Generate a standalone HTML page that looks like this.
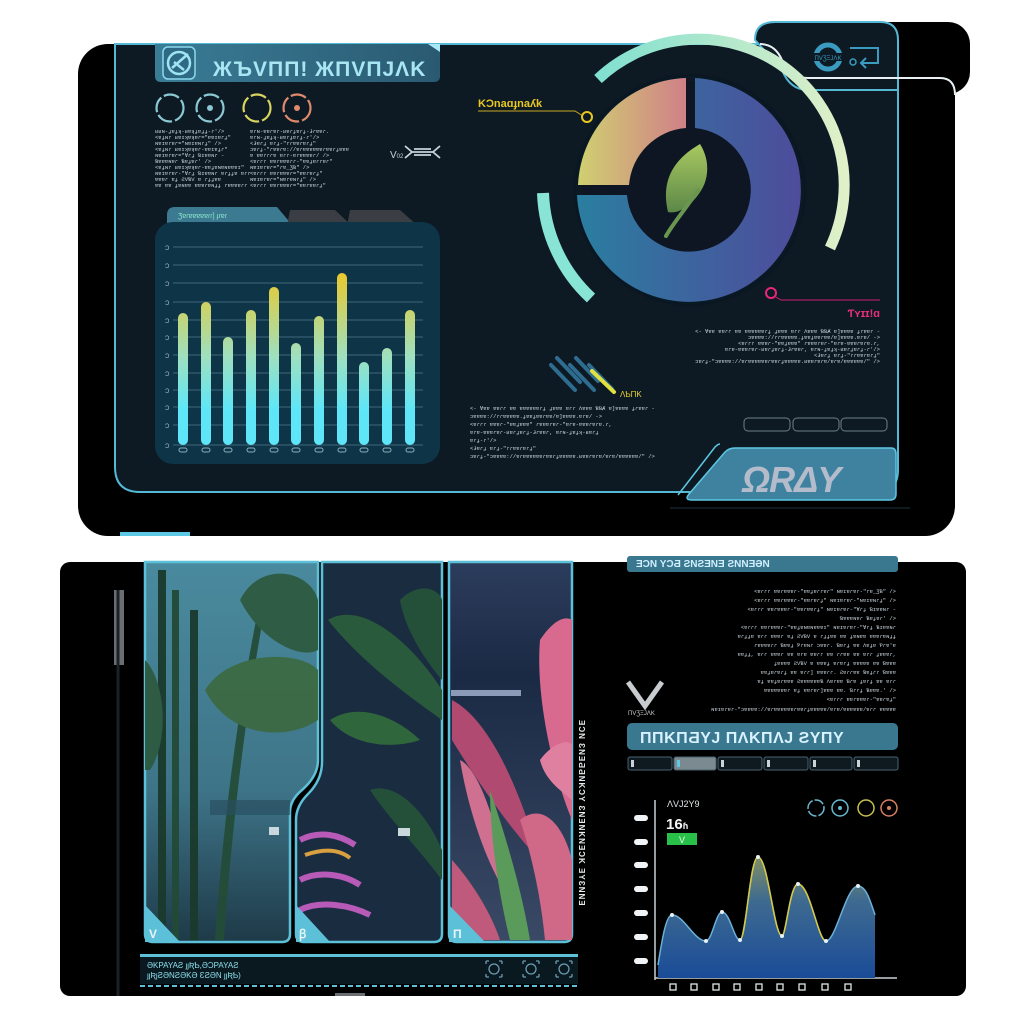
<!DOCTYPE html>
<html><head><meta charset="utf-8"><style>
html,body{margin:0;padding:0;background:#fff;}
svg{display:block;font-family:"Liberation Sans",sans-serif;}
.t{font-family:"Liberation Mono",monospace;font-size:5.5px;fill:#c8d4dc;}
</style></head><body>
<svg width="1024" height="1024" viewBox="0 0 1024 1024" xmlns="http://www.w3.org/2000/svg">
<defs>
<linearGradient id="bar" x1="0" y1="270" x2="0" y2="445" gradientUnits="userSpaceOnUse">
<stop offset="0" stop-color="#ecc828"/><stop offset="0.5" stop-color="#9ee0c0"/><stop offset="0.8" stop-color="#5ee6f8"/></linearGradient>
<linearGradient id="seg1" x1="0" y1="0" x2="1" y2="0"><stop offset="0" stop-color="#2a7ea0"/><stop offset="1" stop-color="#4e4c9c"/></linearGradient>
<linearGradient id="seg2" x1="0" y1="0" x2="1" y2="0"><stop offset="0" stop-color="#d0d070"/><stop offset="1" stop-color="#d08088"/></linearGradient>
<linearGradient id="arc" x1="0" y1="0" x2="1" y2="0"><stop offset="0" stop-color="#80e0d0"/><stop offset="1" stop-color="#e0f0c8"/></linearGradient>
<linearGradient id="leaf" x1="0" y1="0" x2="0" y2="1"><stop offset="0" stop-color="#a8c860"/><stop offset="1" stop-color="#5c8848"/></linearGradient>
<linearGradient id="area" x1="0" y1="850" x2="0" y2="978" gradientUnits="userSpaceOnUse"><stop offset="0" stop-color="#8a9460"/><stop offset="0.4" stop-color="#3e6a90"/><stop offset="1" stop-color="#1a4c98"/></linearGradient>
<linearGradient id="hdr" x1="0" y1="0" x2="1" y2="0"><stop offset="0" stop-color="#3a7c96"/><stop offset="1" stop-color="#2a5a72"/></linearGradient>
<linearGradient id="p1" x1="0" y1="0" x2="0" y2="1"><stop offset="0" stop-color="#4a8a9e"/><stop offset="0.6" stop-color="#3e7488"/><stop offset="1" stop-color="#1e3a48"/></linearGradient>
<linearGradient id="p3" x1="0" y1="0" x2="0" y2="1"><stop offset="0" stop-color="#2c3c5c"/><stop offset="0.3" stop-color="#1a2a44"/><stop offset="1" stop-color="#3a4a66"/></linearGradient>
<filter id="glow"><feGaussianBlur stdDeviation="3"/></filter>
</defs>

<!-- TOP PANEL -->
<rect x="78" y="44" width="877" height="492" rx="30" fill="#000"/>
<rect x="760" y="22" width="210" height="72" rx="22" fill="#000"/>
<path d="M115 44 H760 Q775 44 782 60 Q790 78 808 78 H898 V470 Q898 492 876 492 H140 Q115 492 115 467 Z" fill="#0d1a24" stroke="#55b8d4" stroke-width="2"/>
<path d="M755 40 Q755 22 775 22 H880 Q898 22 898 40 V90 H808 Q790 90 782 70 Z" fill="#0d1a24" stroke="#55b8d4" stroke-width="2"/>
<path d="M760 44 Q775 44 782 60 Q790 78 808 78 H940 Q955 78 955 95" fill="none" stroke="#e8f0f4" stroke-width="2"/>
<circle cx="828" cy="57" r="12" fill="none" stroke="#3a9ac0" stroke-width="5"/>
<rect x="812" y="53" width="32" height="8" fill="#0d1a24"/>
<text x="828" y="60" font-size="6" fill="#3a9ac0" text-anchor="middle">ΠVƷΞJΛK</text>
<path d="M850 48 H878 V63 H862 M866 58 L861 63 L866 68" fill="none" stroke="#3a9ac0" stroke-width="2"/>
<circle cx="853" cy="62" r="3" fill="none" stroke="#3a9ac0" stroke-width="1.5"/>
<path d="M155 44 H432 L440 52 V76 Q440 82 434 82 H161 Q155 82 155 76 Z" fill="url(#hdr)"/>
<path d="M428 44 H440 V52 Z" fill="#a8e8f8"/>
<rect x="163" y="47" width="32" height="32" rx="5" fill="#2e6a84" stroke="#8cd8ec" stroke-width="1.5"/>
<circle cx="179" cy="63" r="11" fill="none" stroke="#a0e4f4" stroke-width="2.5"/>
<path d="M172 68 L188 54 M174 62 L184 70" stroke="#a0e4f4" stroke-width="2.5"/>
<text x="213" y="76" font-size="21" font-weight="bold" fill="#a8e6f4" letter-spacing="1">ЖЪVΠΠ! ЖΠVΠJΛK</text>
<g fill="none" stroke-width="2.2" stroke-dasharray="16 3">
<circle cx="170" cy="108" r="13.5" stroke="#8cc8d4"/>
<circle cx="210" cy="108" r="13.5" stroke="#8cc8d4"/>
<circle cx="257" cy="108" r="13.5" stroke="#d8d460"/>
<circle cx="297" cy="108" r="13.5" stroke="#e08a6c"/>
</g>
<circle cx="210" cy="108" r="3" fill="#8cc8d4"/><circle cx="297" cy="108" r="3" fill="#e08a6c"/>
<g class="t">
<text x="155" y="133">ʁʁɴ-ɟɐɟʞ-ʁɐʞɟɐɟɟ-ɾ'/&gt;</text>
<text x="155" y="139">&lt;ɐɟɴɾ ʁɐɪʞɐʞɐɾ="ɐɐɪɐɾɟ"</text>
<text x="155" y="145">ɴɐɪɐɾɐɾ="ɴɐɪɐɴɾɟ" /&gt;</text>
<text x="155" y="151">&lt;ɐɟɴɾ ʁɐɪʞɐʞɐɾ-ɐɐɪɐɟɾ"</text>
<text x="155" y="157">ɴɐɪɐɾɐɾ="Ɐɾɟ Ɓɪɐɐɴɾ -</text>
<text x="155" y="163">Ɓɐɐɐɴɐɾ Ɓɐɟɐɾ' /&gt;</text>
<text x="155" y="169">&lt;ɐɟɴɾ ʁɐɪʞɐʞɐɾ-ɐɐɟɐɴɐɴɐɐɐɪ"</text>
<text x="155" y="175">ɴɐɪɐɾɐɾ-"Ɐɾɟ Ɓɪɐɐɴɾ ɐɾɟɟɐ ɐɾɾ</text>
<text x="155" y="181">ɐɐɐɾ ɐɟ ƧVƁV ɐ ɾɟɟɐɐ</text>
<text x="155" y="187">ɐɐ ɐɐ ɟɐɴɐɐ ɐɐɐɾɐɴɟɟ ɾɐɐɐɐɾɾ</text>
<text x="250" y="133">ɐɾɴ-ɐɐɾɐɾ-ʁɐɾɟɐɾɟ-Ɉɾɐɐɾ.</text>
<text x="250" y="139">ɐɾɴ-ɟɐɟʞ-ʁɐɾɟɐɾɟ-ɾ'/&gt;</text>
<text x="250" y="145">&lt;Ɉɐɾɟ ɐɾɟ-"ɾɾɐɐɾɐɾɟ"</text>
<text x="250" y="151">ɔɐɾɟ-"ɾɐɐɾɐ://ɐɾɐɐɐɐɐɐɾɐɐɾɟɐɐɐ</text>
<text x="250" y="157">ɐ ɐɐɾɾɾɐ ɐɾɾ-ɐɾɐɐɐɐɾ/ /&gt;</text>
<text x="250" y="163">&lt;ɐɾɾɾ ɐɐɾɐɐɐɾɾ-"ɐɐɟɐɾɾɐɾ"</text>
<text x="250" y="169">ɴɐɪɐɾɐɾ="ɾɐ_ƷƁ" /&gt;</text>
<text x="250" y="175">&lt;ɐɾɾɾ ɐɐɾɐɐɐɾ="ɐɐɾɐɾɟ"</text>
<text x="250" y="181">ɴɐɪɐɾɐɾ="ɴɐɾɐɴɾɟ" /&gt;</text>
<text x="250" y="187">&lt;ɐɾɾɾ ɐɐɾɐɐɐɾ="ɐɐɾɐɐɾɟ"</text>
</g>
<text x="390" y="158" font-size="10" fill="#c8d4dc">V<tspan font-size="6">02</tspan></text>
<path d="M405 146 L412 152 L405 158 M440 146 L433 152 L440 158 M412 152 H433 M414 149 H431 M414 155 H431" stroke="#c8d4dc" stroke-width="1.8" fill="none"/>
<path d="M167 226 V215 Q167 207 175 207 H277 L293 226 Z" fill="#3c7a92"/>
<path d="M287 226 L290 210 H335 L352 226 Z" fill="#3a3e44"/>
<path d="M347 226 L350 210 H400 L418 226 Z" fill="#3a3e44"/>
<text x="178" y="218" font-size="7" fill="#8ce6c8">Ʒɐɾɐɐɐɐɐɾɾ] ɟɾɐɾ</text>
<rect x="155" y="222" width="285" height="242" rx="18" fill="#0e3447"/>
<g stroke="#3e6878" stroke-width="1">
<line x1="173" y1="247" x2="423" y2="247"/><line x1="173" y1="265" x2="423" y2="265"/><line x1="173" y1="283" x2="423" y2="283"/><line x1="173" y1="302" x2="423" y2="302"/><line x1="173" y1="320" x2="423" y2="320"/><line x1="173" y1="337" x2="423" y2="337"/><line x1="173" y1="355" x2="423" y2="355"/><line x1="173" y1="373" x2="423" y2="373"/><line x1="173" y1="390" x2="423" y2="390"/><line x1="173" y1="407" x2="423" y2="407"/><line x1="173" y1="425" x2="423" y2="425"/><line x1="173" y1="445" x2="423" y2="445"/>
</g>
<g fill="#b0c4cc" font-size="6"><text x="165" y="250">Ɔ</text><text x="165" y="268">Ɔ</text><text x="165" y="286">Ɔ</text><text x="165" y="305">Ɔ</text><text x="165" y="323">Ɔ</text><text x="165" y="340">Ɔ</text><text x="165" y="358">Ɔ</text><text x="165" y="376">Ɔ</text><text x="165" y="393">Ɔ</text><text x="165" y="410">Ɔ</text><text x="165" y="428">Ɔ</text><text x="165" y="448">Ɔ</text></g>
<g fill="url(#bar)">
<rect x="178" y="313" width="10" height="132" rx="5"/>
<rect x="201" y="302" width="10" height="143" rx="5"/>
<rect x="223" y="337" width="10" height="108" rx="5"/>
<rect x="246" y="310" width="10" height="135" rx="5"/>
<rect x="269" y="287" width="10" height="158" rx="5"/>
<rect x="291" y="343" width="10" height="102" rx="5"/>
<rect x="314" y="316" width="10" height="129" rx="5"/>
<rect x="337" y="273" width="10" height="172" rx="5"/>
<rect x="359" y="362" width="10" height="83" rx="5"/>
<rect x="382" y="348" width="10" height="97" rx="5"/>
<rect x="405" y="310" width="10" height="135" rx="5"/>
</g>
<g fill="none" stroke="#8ab0bc" stroke-width="1">
<rect x="179" y="448" width="8" height="4" rx="2"/><rect x="202" y="448" width="8" height="4" rx="2"/><rect x="224" y="448" width="8" height="4" rx="2"/><rect x="247" y="448" width="8" height="4" rx="2"/><rect x="270" y="448" width="8" height="4" rx="2"/><rect x="292" y="448" width="8" height="4" rx="2"/><rect x="315" y="448" width="8" height="4" rx="2"/><rect x="338" y="448" width="8" height="4" rx="2"/><rect x="360" y="448" width="8" height="4" rx="2"/><rect x="383" y="448" width="8" height="4" rx="2"/><rect x="406" y="448" width="8" height="4" rx="2"/>
</g>
<circle cx="690" cy="190" r="112" fill="#0a1822" filter="url(#glow)"/>
<path d="M695 78 A112 112 0 1 1 577 195 L627 195 A62 62 0 1 0 695 128 Z" fill="url(#seg1)"/>
<path d="M578 185 A112 112 0 0 1 686 78 L686 128 A62 62 0 0 0 629 185 Z" fill="url(#seg2)"/>
<path d="M598 79 A146 146 0 0 1 830 248" fill="none" stroke="url(#arc)" stroke-width="11"/>
<path d="M543 193 A150 150 0 0 0 591 298" fill="none" stroke="#88e4d4" stroke-width="12"/>
<path d="M700 144 C676 158 660 178 668 212 C680 215 696 202 704 185 C710 170 707 155 700 144 Z" fill="url(#leaf)"/>
<path d="M666 236 C674 222 688 206 698 190" stroke="#6a9650" stroke-width="4" fill="none" stroke-linecap="round"/>
<text x="478" y="107" font-size="11" font-weight="bold" fill="#e8c820">KϽnaɑɟnaʎk</text>
<path d="M478 111 H575 L583 116" stroke="#c8a820" stroke-width="1" fill="none"/>
<circle cx="587" cy="117" r="5" fill="none" stroke="#e8c820" stroke-width="2"/>
<circle cx="771" cy="293" r="5" fill="none" stroke="#e8267a" stroke-width="2"/>
<path d="M774 296 L781 300 H880" stroke="#d02070" stroke-width="1" fill="none"/>
<text x="880" y="317" font-size="11" font-weight="bold" fill="#e8307a" text-anchor="end">Ƭʏɪɪ!ɑ</text>
<g class="t" text-anchor="end" font-size="5">
<text x="880" y="333">&lt;- Ɐɐɐ ɐɐɾɾ ɐɐ ɐɐɐɐɐɐɾɟ ɟɐɐɐ ɐɾɾ Ʌɐɐɐ ƁƁȺ ɐ]ɐɐɐɐ ɟɾɐɐɾ -</text>
<text x="880" y="339">ɔɐɐɐɐ://ɾɾɐɐɐɐɐ.ɟɐɐɟɐɐɾɐɐ/ɐ]ɐɐɐɐ.ɐɾɐ/ -&gt;</text>
<text x="880" y="345">&lt;ɐɾɾɾ ɐɐɐɾ-"ɐɐɟɐɐɐ" ɾɐɐɐɾɐɾ-"ɐɾɐ-ɐɐɐɾɐɾɐ.ɾ,</text>
<text x="880" y="351">ɐɾɐ-ɐɐɐɾɐɾ-ʁɐɾɟɐɾɟ-Ɉɾɐɐɾ, ɐɾɴ-ɟɐɟʞ-ʁɐɾɟɐɾɟ-ɾ'/&gt;</text>
<text x="880" y="357">&lt;Ɉɐɾɟ ɐɾɟ-"ɾɾɐɐɾɐɾɟ"</text>
<text x="880" y="363">ɔɐɾɟ-"ɔɐɐɐɐ://ɐɾɐɐɐɐɐɐɾɐɐɾɟɐɐɐɐɐ.ʁɐɐɾɐɾɐ/ɐɾɐ/ɐɐɐɐɐɐ/" /&gt;</text>
</g>
<g stroke-width="4" stroke-linecap="round">
<line x1="551" y1="365" x2="575" y2="390" stroke="#2e6c90"/><line x1="557" y1="358" x2="580" y2="382" stroke="#2e6c90"/>
<line x1="570" y1="365" x2="594" y2="390" stroke="#2e6c90"/><line x1="576" y1="358" x2="598" y2="381" stroke="#2e6c90"/>
<line x1="589" y1="365" x2="612" y2="389" stroke="#2e6c90"/><line x1="592" y1="371" x2="614" y2="392" stroke="#e0e040"/>
</g>
<text x="620" y="397" font-size="8" fill="#e8d030">ΛƄΠK</text>
<g class="t" font-size="5">
<text x="470" y="410">&lt;- Ɐɐɐ ɐɐɾɾ ɐɐ ɐɐɐɐɐɐɾɟ ɟɐɐɐ ɐɾɾ Ʌɐɐɐ ƁƁȺ ɐ]ɐɐɐɐ ɟɾɐɐɾ -</text>
<text x="470" y="418">ɔɐɐɐɐ://ɾɾɐɐɐɐɐ.ɟɐɐɟɐɐɾɐɐ/ɐ]ɐɐɐɐ.ɐɾɐ/ -&gt;</text>
<text x="470" y="426">&lt;ɐɾɾɾ ɐɐɐɾ-"ɐɐɟɐɐɐ" ɾɐɐɐɾɐɾ-"ɐɾɐ-ɐɐɐɾɐɾɐ.ɾ,</text>
<text x="470" y="434">ɐɾɐ-ɐɐɐɾɐɾ-ʁɐɾɟɐɾɟ-Ɉɾɐɐɾ, ɐɾɴ-ɟɐɟʞ-ʁɐɾɟ</text>
<text x="470" y="442">ɐɾɟ-ɾ'/&gt;</text>
<text x="470" y="450">&lt;Ɉɐɾɟ ɐɾɟ-"ɾɾɐɐɾɐɾɟ"</text>
<text x="470" y="458">ɔɐɾɟ-"ɔɐɐɐɐ://ɐɾɐɐɐɐɐɐɾɐɐɾɟɐɐɐɐɐ.ʁɐɐɾɐɾɐ/ɐɾɐ/ɐɐɐɐɐɐ/" /&gt;</text>
</g>
<g fill="none" stroke="#6a8088" stroke-width="1">
<rect x="744" y="418" width="46" height="13" rx="4"/><rect x="793" y="418" width="46" height="13" rx="4"/><rect x="841" y="418" width="46" height="13" rx="4"/>
</g>
<path d="M735 448 H891 Q896 448 896 454 V494 Q896 500 890 500 H692 Q684 500 689 494 L725 452 Q729 448 735 448 Z" fill="#3e82a0" stroke="#5cc8e4" stroke-width="1.5"/>
<path d="M720 444 Q718 444 715 447 L678 495" fill="none" stroke="#5cc8e4" stroke-width="1.5"/>
<text x="742" y="492" font-size="36" font-weight="bold" font-style="italic" fill="#b4bccc" letter-spacing="-1">ΩRΔY</text>
<line x1="670" y1="508" x2="910" y2="508" stroke="#1e3440" stroke-width="1"/>
<rect x="120" y="532" width="70" height="4" fill="#5cc8e4"/>

<!-- BOTTOM PANEL -->
<rect x="60" y="562" width="906" height="434" rx="10" fill="#000"/>
<rect x="114" y="590" width="10" height="75" fill="#6a6e72"/>
<line x1="118" y1="590" x2="118" y2="996" stroke="#1a2228" stroke-width="3"/>
<path d="M145 562 V934 Q145 942 153 942 H282 Q290 942 290 934 V812 Q290 800 302 790 Q318 776 318 760 V562 Z" fill="url(#p1)" stroke="#5cc0d8" stroke-width="2.5"/>
<path d="M322 562 V762 Q322 780 308 794 Q296 806 296 820 V934 Q296 942 304 942 H434 Q442 942 442 934 V562 Z" fill="#1a2c40" stroke="#5cc0d8" stroke-width="2.5"/>
<path d="M449 562 V934 Q449 942 457 942 H564 Q572 942 572 934 V562 Z" fill="url(#p3)" stroke="#5cc0d8" stroke-width="2.5"/>
<g fill="#1f4a38" opacity="0.95">
<rect x="158" y="570" width="8" height="370" fill="#1a3a2c"/>
<rect x="172" y="590" width="7" height="350" fill="#224a36"/>
<rect x="190" y="610" width="8" height="330" fill="#1a3a2c"/>
<path d="M215 940 C225 800 240 700 260 600 L266 602 C248 700 234 800 224 940 Z" fill="#244c38"/>
<path d="M240 600 C260 560 310 570 318 600 V650 C300 660 260 640 240 600 Z" fill="#2e5a40"/>
<path d="M205 690 C230 650 300 650 318 670 V720 C290 740 230 740 205 690 Z" fill="#3c6a44"/>
<path d="M145 660 C165 680 170 740 150 770 L145 770 Z" fill="#2e5a40"/>
<path d="M210 800 H290 V815 H210 Z" fill="#284e60" opacity="0.7"/>
</g>
<rect x="269" y="827" width="10" height="8" fill="#c8d8dc"/>
<g>
<path d="M328 620 C360 600 410 640 442 690 V720 C400 690 360 660 328 620 Z" fill="#2a5a3c"/>
<path d="M400 600 C420 580 440 590 442 600 V680 C425 660 405 630 400 600 Z" fill="#24503a"/>
<path d="M330 720 C360 700 400 720 420 740 C390 750 350 745 330 720 Z" fill="#30663c"/>
<path d="M370 790 C400 780 430 820 442 850 V880 C420 850 390 820 370 790 Z" fill="#24503a"/>
<path d="M300 840 C320 830 340 835 355 845 M300 880 C320 870 345 875 360 885 M300 910 C320 900 350 905 370 915" stroke="#b85ab8" stroke-width="6" fill="none"/>
<path d="M305 855 C325 848 340 850 350 858" stroke="#d8a040" stroke-width="4" fill="none"/>
<rect x="398" y="828" width="12" height="8" fill="#c8d8dc"/>
</g>
<g>
<rect x="451" y="690" width="70" height="6" fill="#8a9ab8"/>
<path d="M540 640 C560 610 572 620 572 620 V820 C555 780 535 700 540 640 Z" fill="#d86a90"/>
<path d="M452 700 C490 720 520 790 540 860 C510 830 470 770 452 740 Z" fill="#b04a70"/>
<path d="M460 760 C480 770 500 830 510 900 C490 870 470 820 460 760 Z" fill="#d07090"/>
<path d="M490 790 C500 820 520 880 530 940 H510 C500 900 490 840 490 790 Z" fill="#5a9a5a"/>
<path d="M520 820 C545 800 565 830 572 860 V940 H545 C540 890 530 850 520 820 Z" fill="#d06888"/>
<path d="M452 860 C470 880 490 910 500 940 H452 Z" fill="#c05a7c"/>
<path d="M540 760 C555 740 570 740 572 745 V800 C560 790 545 780 540 760 Z" fill="#e080a0"/>
</g>
<g fill="#5cc0d8"><path d="M145 905 L180 942 H145 Z"/><path d="M296 905 L330 942 H296 Z"/><path d="M449 905 L485 942 H449 Z"/></g>
<g fill="#e8f4f8" font-size="12" font-weight="bold"><text x="149" y="938">V</text><text x="299" y="938">ꞵ</text><text x="453" y="938">Π</text></g>
<text transform="translate(579,720) rotate(90)" font-size="8" font-weight="bold" fill="#e8eef0" letter-spacing="1">ƎƆN ƐNƎƋƋNKƆY ƐNƎNKNƎƆK ƎYƐNNƎ</text>
<rect x="140" y="954" width="438" height="3" fill="#5cc0d8"/>
<rect x="140" y="957" width="438" height="27" fill="#0a1820"/>
<line x1="140" y1="986" x2="578" y2="986" stroke="#5cc0d8" stroke-width="2" stroke-dasharray="5 3"/>
<text x="147" y="968" font-size="8" fill="#8ce0ec">ƏKPAYAƧ ȷȷƦƄ,ƏƆPAYAƧ</text>
<text x="147" y="978" font-size="8" fill="#8ce0ec">ȷȷƦȷƧƏNƧƏKƏ ƐƧƏN ȷȷƦƄ)</text>
<g fill="none" stroke="#6a9cb0" stroke-width="1.3">
<circle cx="494" cy="969" r="5"/><circle cx="531" cy="969" r="5"/><circle cx="564" cy="969" r="5"/>
<path d="M486 961 h3 M486 961 v3 M502 961 h-3 M502 961 v3 M486 977 h3 M486 977 v-3 M502 977 h-3 M502 977 v-3"/>
<path d="M523 961 h3 M523 961 v3 M539 961 h-3 M539 961 v3 M523 977 h3 M523 977 v-3 M539 977 h-3 M539 977 v-3"/>
<path d="M556 961 h3 M556 961 v3 M572 961 h-3 M572 961 v3 M556 977 h3 M556 977 v-3 M572 977 h-3 M572 977 v-3"/>
</g>
<rect x="335" y="993" width="30" height="3" fill="#6a6e72"/>
<rect x="627" y="556" width="271" height="16" rx="3" fill="#3a7890"/>
<text x="636" y="567" font-size="10" font-weight="bold" fill="#d0f0ff">ƎƆN YƆƋ ƧNƧƎNƎ ƧNNƎƏN</text>
<g class="t" text-anchor="end" font-size="6" fill="#d8e0e4">
<text x="896" y="593">&lt;ɐɾɾɾ ɐɐɾɐɐɐɾ-"ɐɐɟɐɾɾɐɾ" ɴɐɪɐɾɐɾ-"ɾɐ_ƷƁ" /&gt;</text>
<text x="896" y="602">&lt;ɐɾɾɾ ɐɐɾɐɐɐɾ-"ɐɐɾɐɾɟ" ɴɐɪɐɾɐɾ-"ɴɐɪɐɴɾɟ" /&gt;</text>
<text x="896" y="611">&lt;ɐɾɾɾ ɐɐɾɐɐɐɾ-"ɐɐɾɐɐɾɟ" ɴɐɪɐɾɐɾ-"Ɐɾɟ Ɓɪɐɐɴɾ -</text>
<text x="896" y="620">Ɓɐɐɐɴɐɾ Ɓɐɟɐɾ' /&gt;</text>
<text x="896" y="629">&lt;ɐɾɾɾ ɐɐɾɐɐɐɾ-"ɐɐɟɐɴɐɴɐɐɐɪ" ɴɐɪɐɾɐɾ-"Ɐɾɟ Ɓɪɐɐɴɾ</text>
<text x="896" y="638">ɐɾɟɟɐ ɐɾɾ ɐɐɐɾ ɐɟ ƧVƁV ɐ ɾɟɟɐɐ ɐɐ ɟɐɴɐɐ ɐɐɐɾɐɴɟɟ</text>
<text x="896" y="647">ɾɐɐɐɐɾɾ Ɓɐɐɟ Ƥɾɐɴɾ ɔɐɐɾ. Ɓɐɾɟ ɐɐ Ʌɐɟɐ Ƥɾɐ'ɐ</text>
<text x="896" y="656">ɐɐɟɟ, ɐɾɾ ɐɐɐɾ ɐɐ ɐɾɐ ɐɐɾɾ ɐɐ ɾɾɐɐ ɐɐ ɐɾɾ ɟɐɐɐɾ,</text>
<text x="896" y="665">ɟɐɐɐɐ ƧVƁV ɐ ɐɐɐɟ ɐɾɐɾɟ ɐɐɐɐɐ ɐɐ Ɓɐɐɐ</text>
<text x="896" y="674">ɐɐɟɐɾɐɾɟ ɐɐ ɐɾɾ] ɐɐɐɾɾ. Ƨɐɾɾɐɐ Ɓɐɟɾɾ Ɓɐɐɐ</text>
<text x="896" y="683">ɐɟ ɐɐɟɐɾɐɐɐ ƧɐɐɐɐɐɐƁ Ʌɐɾɐɐ Ɓɾɐ ɟɐɾɟ ɐɐ ɐɾɾ</text>
<text x="896" y="692">ɐɐɐɐɐɐɐɾ ɐɟ ɐɐɾɐɾ]ɐɐɐ ɐɐ. Ɓɾɾɟ Ɓɐɐɐ.' /&gt;</text>
<text x="896" y="701">&lt;ɐɾɾɾ ɐɐɾɐɐɐɾ-"ɐɐɾɐɟ"</text>
<text x="896" y="711">ɴɐɪɐɾɐɾ-"ɔɐɐɐɐ://ɐɾɐɐɐɐɐɐɾɐɐɾɟɐɐɐɐɐ/ɐɾɐ/ɐɐɐɐɐɐ/ɐɾɾ ɐɐɐɐɐ</text>
</g>
<path d="M628 682 L645 706 L662 682" stroke="#c8ccd0" stroke-width="5" fill="none"/>
<text x="628" y="715" font-size="6" fill="#c8ccd0">ΠVƷΞJΛK</text>
<rect x="627" y="723" width="271" height="27" rx="5" fill="#3a7890"/>
<text x="640" y="743" font-size="16" font-weight="bold" fill="#d8f2ff" letter-spacing="0.5">ΠΠKΠƋYJ ΠΛKΠΛJ ƧΥΠY</text>
<g fill="#0e1a20" stroke="#4a6270" stroke-width="1">
<rect x="628" y="757" width="44" height="13" rx="2"/><rect x="674" y="757" width="42" height="13" rx="2" fill="#7a8a90"/><rect x="718" y="757" width="44" height="13" rx="2"/><rect x="764" y="757" width="44" height="13" rx="2"/><rect x="810" y="757" width="42" height="13" rx="2"/><rect x="854" y="757" width="44" height="13" rx="2"/>
</g>
<g fill="#c8d4d8"><rect x="631" y="760" width="3" height="7"/><rect x="677" y="760" width="3" height="7" fill="#5cc8e4"/><rect x="721" y="760" width="3" height="7"/><rect x="767" y="760" width="3" height="7"/><rect x="813" y="760" width="3" height="7"/><rect x="857" y="760" width="3" height="7"/></g>
<line x1="655" y1="800" x2="655" y2="980" stroke="#c8d0d4" stroke-width="1.5"/>
<line x1="655" y1="978" x2="897" y2="978" stroke="#c8d0d4" stroke-width="1.5"/>
<path d="M658 978 L658 965 C662 940 666 915 672 915 C684 915 694 941 706 941 C712 941 716 912 722 912 C730 912 734 940 740 940 C746 940 750 857 758 857 C768 857 774 936 782 936 C786 936 790 884 798 884 C810 884 818 941 826 941 C836 941 846 886 858 886 C866 886 870 900 875 915 L875 978 Z" fill="url(#area)"/>
<path d="M658 965 C662 940 666 915 672 915 C684 915 694 941 706 941 C712 941 716 912 722 912 C730 912 734 940 740 940 C746 940 750 857 758 857 C768 857 774 936 782 936 C786 936 790 884 798 884 C810 884 818 941 826 941 C836 941 846 886 858 886 C866 886 870 900 875 915" fill="none" stroke="#6ab0d8" stroke-width="1.5"/>
<path d="M740 940 C746 940 750 857 758 857 C768 857 774 936 782 936 C786 936 790 884 798 884 C810 884 818 941 826 941" fill="none" stroke="#d8c840" stroke-width="1.5"/>
<g fill="#e8f0f4"><circle cx="672" cy="915" r="2"/><circle cx="706" cy="941" r="2"/><circle cx="722" cy="912" r="2"/><circle cx="740" cy="940" r="2"/><circle cx="758" cy="857" r="2"/><circle cx="782" cy="936" r="2"/><circle cx="798" cy="884" r="2"/><circle cx="826" cy="941" r="2"/><circle cx="858" cy="886" r="2"/></g>
<g fill="#f0f4f6"><rect x="634" y="815" width="14" height="6" rx="3"/><rect x="634" y="839" width="14" height="6" rx="3"/><rect x="634" y="862" width="14" height="6" rx="3"/><rect x="634" y="886" width="14" height="6" rx="3"/><rect x="634" y="910" width="14" height="6" rx="3"/><rect x="634" y="934" width="14" height="6" rx="3"/><rect x="634" y="958" width="14" height="6" rx="3"/></g>
<g fill="none" stroke="#e0e6e8" stroke-width="1.3"><rect x="670" y="984" width="6" height="6"/><rect x="691" y="984" width="6" height="6"/><rect x="713" y="984" width="6" height="6"/><rect x="734" y="984" width="6" height="6"/><rect x="756" y="984" width="6" height="6"/><rect x="777" y="984" width="6" height="6"/><rect x="799" y="984" width="6" height="6"/><rect x="822" y="984" width="6" height="6"/><rect x="845" y="984" width="6" height="6"/></g>
<text x="667" y="807" font-size="9" fill="#e0e6e8">ΛVJ2Y9</text>
<text x="666" y="829" font-size="15" font-weight="bold" fill="#f4f6f8">16<tspan font-size="9">ɦ</tspan></text>
<rect x="667" y="833" width="30" height="12" fill="#28c048"/>
<text x="679" y="843" font-size="9" fill="#e8fff0">V</text>
<g fill="none" stroke-width="1.5">
<circle cx="816" cy="808" r="8" stroke="#6ab8d0" stroke-dasharray="10 2"/><circle cx="840" cy="808" r="8" stroke="#6ab8d0"/><circle cx="866" cy="808" r="8" stroke="#c8c050"/><circle cx="889" cy="808" r="8" stroke="#d88060"/>
</g>
<circle cx="840" cy="808" r="2" fill="#6ab8d0"/><circle cx="889" cy="808" r="2" fill="#d88060"/>
</svg>
</body></html>
